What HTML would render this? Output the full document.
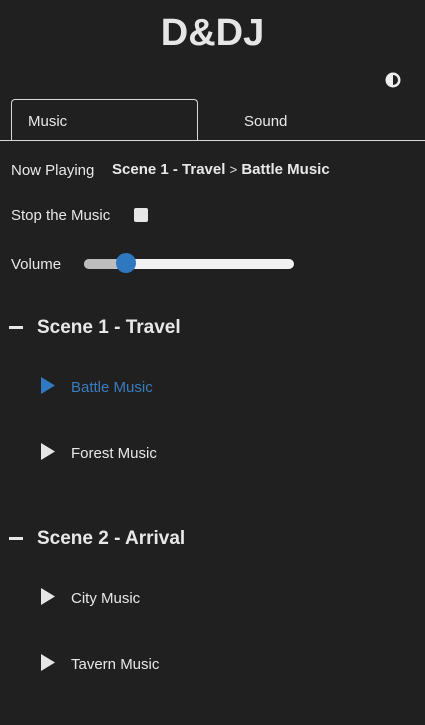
<!DOCTYPE html>
<html><head><meta charset="utf-8"><style>
*{margin:0;padding:0;box-sizing:border-box}
body{width:425px;height:725px;background:#202020;color:#e8e8e8;font-family:"Liberation Sans",sans-serif;position:relative;overflow:hidden}
.a{position:absolute;white-space:nowrap}
.t{font-size:15px}
</style></head><body>
<div class="a" style="left:0;width:425px;text-align:center;top:12px;font-size:38px;font-weight:bold;color:#e6e6e6">D&amp;DJ</div>
<svg class="a" style="left:385px;top:72px" width="16" height="16" viewBox="0 0 16 16"><circle cx="8" cy="8" r="7.5" fill="#eee"/><path d="M8 3a5 5 0 0 1 0 10z" fill="#202020"/></svg>
<div class="a" style="left:11px;top:99px;width:187px;height:42px;border:1px solid #d8d8d8;border-bottom:none;border-radius:4px 4px 0 0;background:#202020"></div>
<div class="a" style="left:0;top:140px;width:425px;height:1px;background:#d8d8d8"></div>
<div class="a t" style="left:28px;top:113px">Music</div>
<div class="a t" style="left:244px;top:113px">Sound</div>
<div class="a t" style="left:11px;top:162px">Now Playing</div>
<div class="a" style="left:112px;top:161px;font-size:15px"><b>Scene 1 - Travel</b> <span style="font-size:13px">&gt;</span> <b>Battle Music</b></div>
<div class="a t" style="left:11px;top:207px">Stop the Music</div>
<div class="a" style="left:134px;top:208px;width:14px;height:14px;background:#e6e6e6;border-radius:2px"></div>
<div class="a t" style="left:11px;top:256px">Volume</div>
<div class="a" style="left:84px;top:259px;width:210px;height:10px;border-radius:5px;background:#f2f2f2"></div>
<div class="a" style="left:84px;top:259px;width:42px;height:10px;border-radius:5px 0 0 5px;background:#bdbdbd"></div>
<div class="a" style="left:116px;top:253px;width:20px;height:20px;border-radius:50%;background:#2f78c0"></div>
<div class="a" style="left:9px;top:326px;width:14px;height:3px;background:#e6e6e6"></div>
<div class="a" style="left:37px;top:317px;font-size:19px;font-weight:bold">Scene 1 - Travel</div>
<svg class="a" style="left:40px;top:377px" width="16" height="17"><path d="M1 0L15 8.5L1 17Z" fill="#3179c0"/></svg>
<div class="a t" style="left:71px;top:379px;color:#3a7cc0">Battle Music</div>
<svg class="a" style="left:40px;top:443px" width="16" height="17"><path d="M1 0L15 8.5L1 17Z" fill="#e6e6e6"/></svg>
<div class="a t" style="left:71px;top:445px">Forest Music</div>
<div class="a" style="left:9px;top:537px;width:14px;height:3px;background:#e6e6e6"></div>
<div class="a" style="left:37px;top:528px;font-size:19px;font-weight:bold">Scene 2 - Arrival</div>
<svg class="a" style="left:40px;top:588px" width="16" height="17"><path d="M1 0L15 8.5L1 17Z" fill="#e6e6e6"/></svg>
<div class="a t" style="left:71px;top:590px">City Music</div>
<svg class="a" style="left:40px;top:654px" width="16" height="17"><path d="M1 0L15 8.5L1 17Z" fill="#e6e6e6"/></svg>
<div class="a t" style="left:71px;top:656px">Tavern Music</div>
</body></html>
